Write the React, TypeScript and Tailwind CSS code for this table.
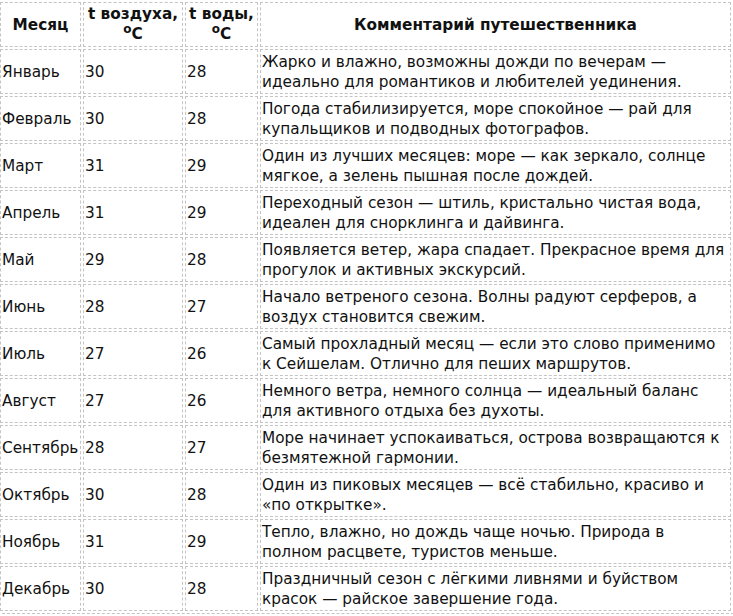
import React from "react";

const rows: [string, string, string, string, string][] = [
  ["Январь", "30", "28", "Жарко и влажно, возможны дожди по вечерам —", "идеально для романтиков и любителей уединения."],
  ["Февраль", "30", "28", "Погода стабилизируется, море спокойное — рай для", "купальщиков и подводных фотографов."],
  ["Март", "31", "29", "Один из лучших месяцев: море — как зеркало, солнце", "мягкое, а зелень пышная после дождей."],
  ["Апрель", "31", "29", "Переходный сезон — штиль, кристально чистая вода,", "идеален для снорклинга и дайвинга."],
  ["Май", "29", "28", "Появляется ветер, жара спадает. Прекрасное время для", "прогулок и активных экскурсий."],
  ["Июнь", "28", "27", "Начало ветреного сезона. Волны радуют серферов, а", "воздух становится свежим."],
  ["Июль", "27", "26", "Самый прохладный месяц — если это слово применимо", "к Сейшелам. Отлично для пеших маршрутов."],
  ["Август", "27", "26", "Немного ветра, немного солнца — идеальный баланс", "для активного отдыха без духоты."],
  ["Сентябрь", "28", "27", "Море начинает успокаиваться, острова возвращаются к", "безмятежной гармонии."],
  ["Октябрь", "30", "28", "Один из пиковых месяцев — всё стабильно, красиво и", "«по открытке»."],
  ["Ноябрь", "31", "29", "Тепло, влажно, но дождь чаще ночью. Природа в", "полном расцвете, туристов меньше."],
  ["Декабрь", "30", "28", "Праздничный сезон с лёгкими ливнями и буйством", "красок — райское завершение года."],
];

const cell = "border border-dashed border-[#c4c4c4] p-[1px] h-[45px] align-middle whitespace-nowrap overflow-visible";

export default function App() {
  return (
    <div className="w-[733px] h-[616px] overflow-hidden bg-white">
      <table
        className="w-[737px] -ml-[3px] -mt-[1px] border-separate border-spacing-[2px] border border-dashed border-[#c4c4c4] table-fixed text-[15.3px] leading-[20px] text-[#111]"
        style={{ fontFamily: '"DejaVu Sans", Verdana, sans-serif' }}
      >
        <colgroup>
          <col className="w-[81px]" />
          <col className="w-[100px]" />
          <col className="w-[73px]" />
          <col className="w-[471px]" />
        </colgroup>
        <thead>
          <tr>
            <th className={cell + " text-center font-bold"}>Месяц</th>
            <th className={cell + " text-center font-bold"}>
              t воздуха,
              <br />
              <span className="relative -top-[6px] text-[12px]">o</span>C
            </th>
            <th className={cell + " text-center font-bold"}>
              t воды,
              <br />
              <span className="relative -top-[6px] text-[12px]">o</span>C
            </th>
            <th className={cell + " text-center font-bold"}>Комментарий путешественника</th>
          </tr>
        </thead>
        <tbody>
          {rows.map((r) => (
            <tr key={r[0]}>
              <td className={cell}>{r[0]}</td>
              <td className={cell}>{r[1]}</td>
              <td className={cell}>{r[2]}</td>
              <td className={cell}>
                {r[3]}
                <br />
                {r[4]}
              </td>
            </tr>
          ))}
        </tbody>
      </table>
    </div>
  );
}
